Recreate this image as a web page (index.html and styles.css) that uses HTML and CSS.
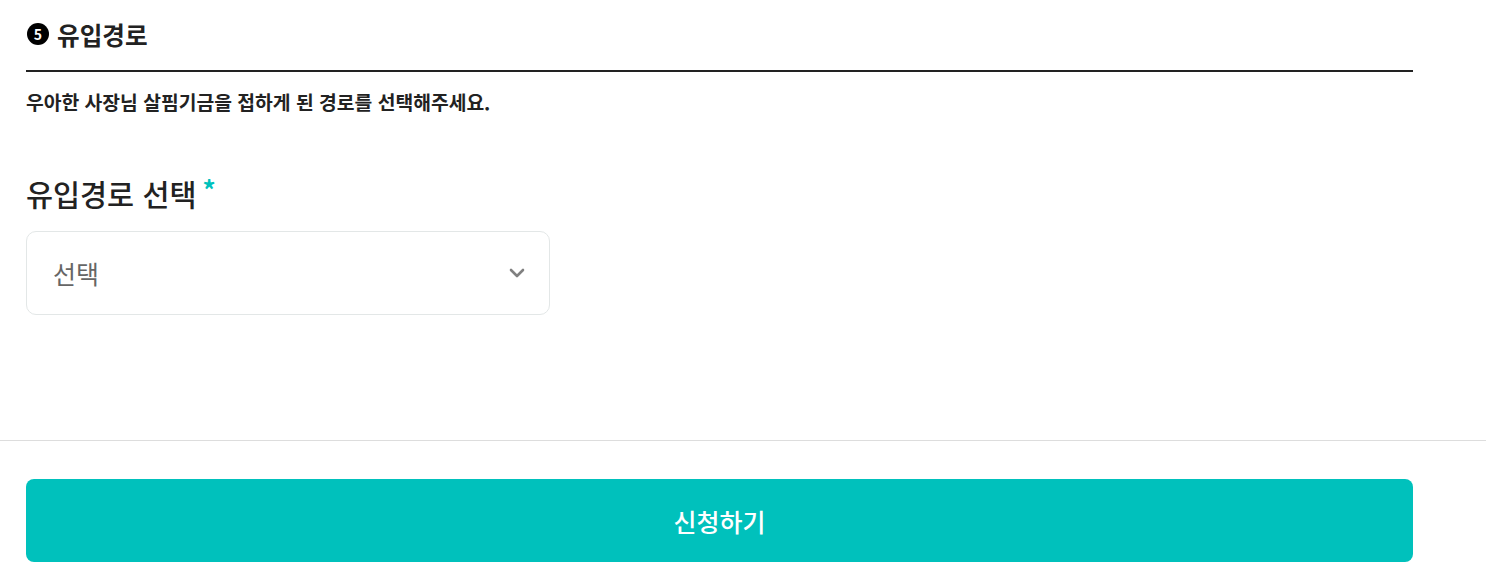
FILE: index.html
```html
<!DOCTYPE html>
<html lang="ko">

<head>
    <meta charset="UTF-8">
    <meta name="viewport" content="width=device-width, initial-scale=1.0">
    <title>유입경로</title>
    <link rel="stylesheet" href="styles.css">
</head>

<body>
    <div class="section">
        <div class="section-head">
            <span class="step">5</span>
            <h2 class="section-title">유입경로</h2>
        </div>
        <p class="section-desc">우아한 사장님 살핌기금을 접하게 된 경로를 선택해주세요.</p>

        <div class="field">
            <label class="field-label">유입경로 선택<span class="required">*</span></label>
            <div class="select">
                <span class="select-text">선택</span>
                <svg class="select-arrow" width="16" height="10" viewBox="0 0 16 10">
                    <path d="M2 2 L8 8 L14 2" fill="none" stroke="#808080" stroke-width="2.6" stroke-linecap="round" stroke-linejoin="round" />
                </svg>
            </div>
        </div>
    </div>

    <div class="footer">
        <button class="submit">신청하기</button>
    </div>
</body>

</html>
```

FILE: styles.css
```css
body {
    margin: 0;
    font-family: "Noto Sans CJK KR", "Noto Sans", sans-serif;
    color: #222;
    background: #fff;
}

.section {
    padding: 0 73px 0 26px;
}

.section-head {
    display: flex;
    align-items: center;
    gap: 8px;
    height: 72px;
    box-sizing: border-box;
    border-bottom: 2px solid #222;
}

.step {
    width: 22px;
    height: 22px;
    border-radius: 50%;
    background: #000;
    color: #fff;
    font-size: 14px;
    font-weight: 700;
    display: flex;
    align-items: center;
    justify-content: center;
    margin-left: 1px;
    margin-bottom: 3px;
}

.section-title {
    margin: 0 0 3px;
    font-size: 24.6px;
    font-weight: 700;
    line-height: 34px;
}

.section-desc {
    margin: 17px 0 0;
    font-size: 19.3px;
    font-weight: 700;
    line-height: 26px;
}

.field {
    margin-top: 59px;
}

.field-label {
    display: flex;
    align-items: flex-start;
    font-size: 29.4px;
    font-weight: 500;
    line-height: 38px;
}

.required {
    color: #00c1bc;
    margin-left: 6px;
    font-size: 26px;
    font-weight: 700;
    line-height: 30px;
}

.select {
    margin-top: 19px;
    width: 524px;
    height: 84px;
    box-sizing: border-box;
    border: 1px solid #e3e7e7;
    border-radius: 10px;
    display: flex;
    align-items: center;
    justify-content: space-between;
    padding: 0 24px 0 26px;
}

.select-text {
    font-size: 25px;
    color: #666;
}

.footer {
    margin-top: 125px;
    border-top: 1px solid #ddd;
    padding: 38px 73px 0 26px;
}

.submit {
    width: 100%;
    height: 83px;
    border: none;
    border-radius: 8px;
    background: #00c1bc;
    color: #fff;
    font-family: inherit;
    font-size: 25px;
    font-weight: 500;
    cursor: pointer;
}
```
